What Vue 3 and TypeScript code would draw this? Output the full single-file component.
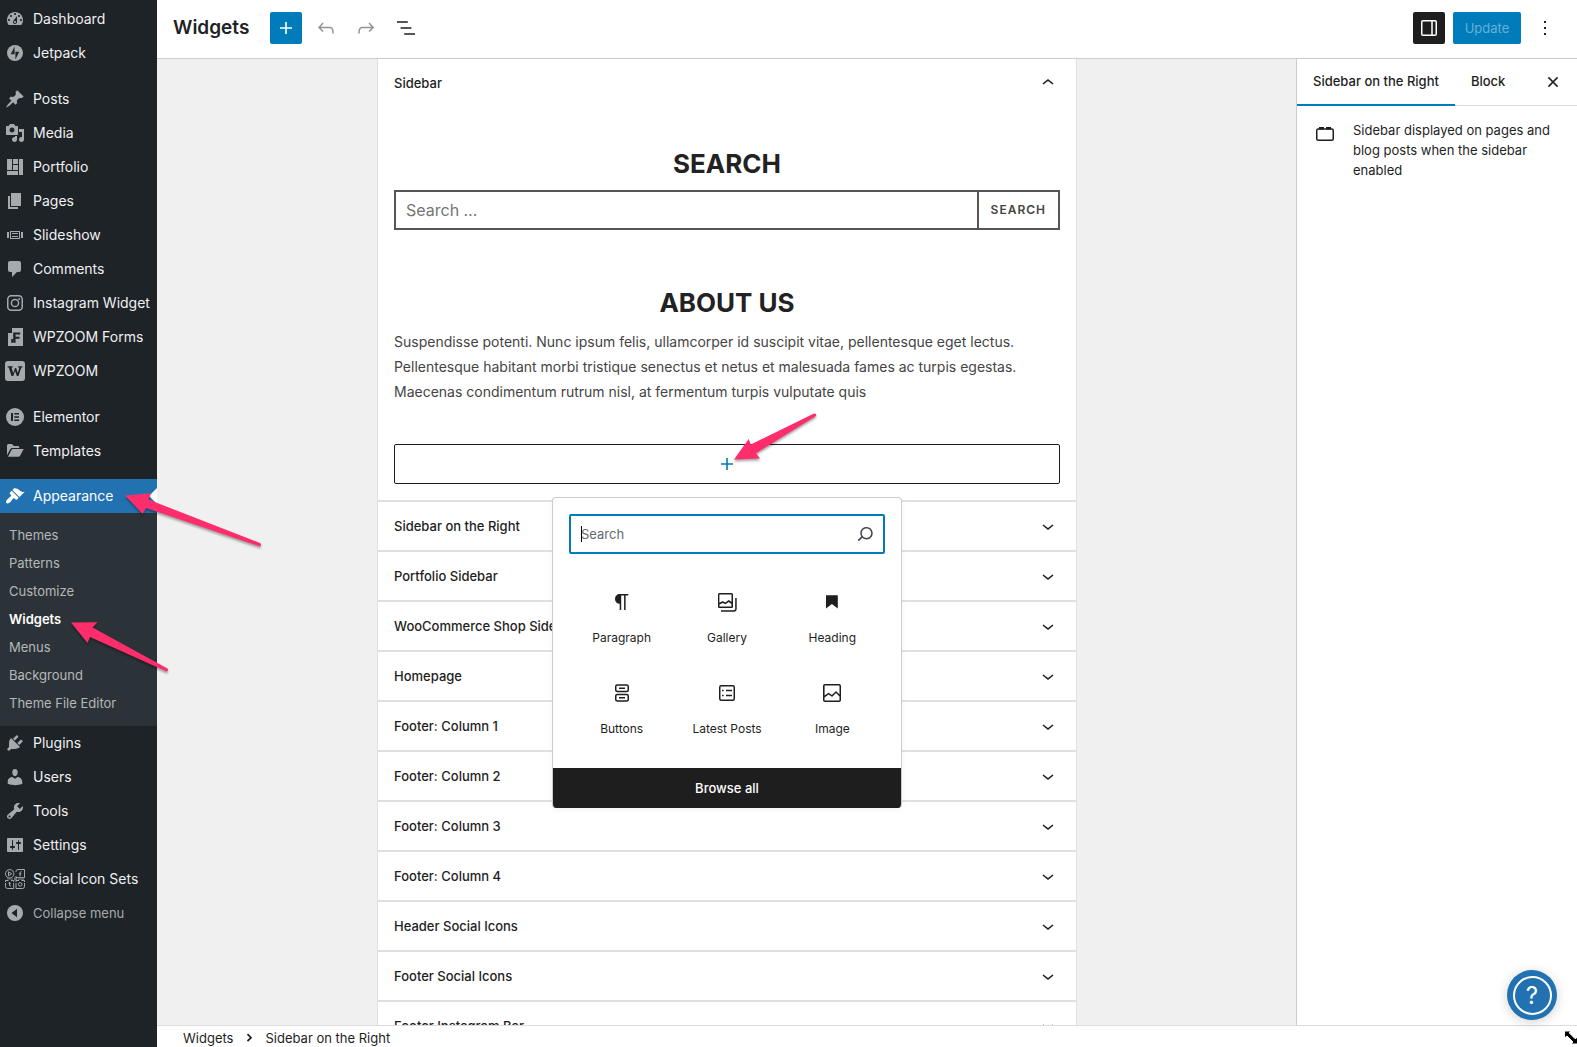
<script setup lang="ts">
import { ref } from 'vue'

interface MenuItem {
  label: string
  icon: string
  separated?: boolean
}

const icons: Record<string, string> = {
  dashboard:
    '<path fill-rule="evenodd" d="M3.76 16h12.48c1.1-1.37 1.76-3.11 1.76-5 0-4.42-3.58-8-8-8s-8 3.58-8 8c0 1.89.66 3.63 1.76 5zM10 4c.55 0 1 .45 1 1s-.45 1-1 1-1-.45-1-1 .45-1 1-1zM6 6c.55 0 1 .45 1 1s-.45 1-1 1-1-.45-1-1 .45-1 1-1zm8 0c.55 0 1 .45 1 1s-.45 1-1 1-1-.45-1-1 .45-1 1-1zm-5.37 5.55L12 7v6c0 1.1-.9 2-2 2s-2-.9-2-2c0-.57.24-1.08.63-1.45zM4 10c.55 0 1 .45 1 1s-.45 1-1 1-1-.45-1-1 .45-1 1-1zm12 0c.55 0 1 .45 1 1s-.45 1-1 1-1-.45-1-1 .45-1 1-1zm-5 3c0-.55-.45-1-1-1s-1 .45-1 1 .45 1 1 1 1-.45 1-1z"/>',
  jetpack:
    '<circle cx="10" cy="10" r="8"/><path fill="#1d2327" d="M9.6 3.6v7.6H5.7zM10.4 16.4V8.8h3.9z"/>',
  posts:
    '<path d="M10.44 3.02l1.82-1.82 6.36 6.35-1.83 1.82c-1.05-.68-2.48-.57-3.41.36l-.75.75c-.92.93-1.04 2.35-.35 3.41l-1.83 1.82-2.41-2.41-2.8 2.79c-.42.42-3.38 2.71-3.8 2.29s1.86-3.39 2.28-3.81l2.79-2.79L4.1 9.36l1.83-1.82c1.05.69 2.48.57 3.4-.36l.75-.75c.93-.92 1.05-2.35.36-3.41z"/>',
  media:
    '<path fill-rule="evenodd" d="M13 11V4c0-.55-.45-1-1-1h-1.67L9 1H5L3.67 3H2c-.55 0-1 .45-1 1v7c0 .55.45 1 1 1h10c.55 0 1-.45 1-1zM7 4.5c1.38 0 2.5 1.12 2.5 2.5S8.38 9.5 7 9.5 4.5 8.38 4.5 7 5.62 4.5 7 4.5zM14 6h5v10.5c0 1.38-1.12 2.5-2.5 2.5S14 17.88 14 16.5s1.12-2.5 2.5-2.5c.17 0 .34.02.5.05V9h-3V6zm-4 8.05V13h2v3.5c0 1.38-1.12 2.5-2.5 2.5S7 17.88 7 16.5 8.12 14 9.5 14c.17 0 .34.02.5.05z"/>',
  portfolio: '<path d="M2 2h5v11H2V2zm6 0h5v5H8V2zm6 0h4v16h-4V2zM8 8h5v5H8V8zm-6 6h11v4H2v-4z"/>',
  pages: '<path d="M6 15V2h10v13H6zm-1 1h8v2H3V5h2v11z"/>',
  slideshow:
    '<path fill-rule="evenodd" d="M5 14V6h10v8H5zm-3-1V7h2v6H2zm4-6v6h8V7H6zm10 0h2v6h-2V7zm-3 2V8H7v1h6zm0 3v-1H7v1h6z"/>',
  comments:
    '<path d="M5 2h9c1.1 0 2 .9 2 2v7c0 1.1-.9 2-2 2h-2l-5 5v-5H5c-1.1 0-2-.9-2-2V4c0-1.1.9-2 2-2z"/>',
  instagram:
    '<g fill="none" stroke="currentColor" stroke-width="1.5"><rect x="2.75" y="2.75" width="14.5" height="14.5" rx="3.5"/><circle cx="10" cy="10" r="3.6"/></g><circle cx="14.1" cy="5.9" r="1"/>',
  forms:
    '<path d="M7 1h11v18H3V5h4z"/><path fill="#1d2327" d="M3 5h3.2V1H7v5H3zM8.2 5.4h7v2h-4.6v2.3h4v2h-4v4H8.2z"/><path fill="#1d2327" d="M8.2 12h-2v3.7h2z"/>',
  wpzoom:
    '<rect width="20" height="20" rx="3"/><path fill="#1d2327" d="M2.7 5.3h5v1.3H6.5l1.7 5.3 1.8-5h1.1l1.7 5 1.6-5.3h-1.3V5.3h4.3v1.3h-1.1l-2.8 8.5h-1.7l-1.7-5-1.8 5H6.5L3.8 6.6H2.7z"/>',
  elementor:
    '<circle cx="10" cy="10" r="9"/><path fill="#1d2327" d="M6 6h2v8H6zM9.3 6H14v1.6H9.3zM9.3 9.2H14v1.6H9.3zM9.3 12.4H14V14H9.3z"/>',
  templates:
    '<path d="M2 14.3V4.5Q2 3 3.5 3H7l1.8 2H13q1.3 0 1.3 1.3V7H7.5Q6 7 5.2 8.3zM3 15.7L6.3 9.2Q6.8 8 8.2 8h10.5l-3.5 6.5q-.6 1.2-2 1.2z"/>',
  appearance:
    '<path d="M14.48 11.06L7.41 3.99l1.5-1.5c.5-.56 2.3-.47 3.51.32 1.21.8 1.43 1.28 2.91 2.1 1.18.64 2.45 1.26 4.45.85zm-.71.71L6.7 4.7 4.93 6.47c-.39.39-.39 1.02 0 1.41l1.06 1.06c.39.39.39 1.03 0 1.42-.6.6-1.43 1.11-2.21 1.69-.35.26-.7.53-1.01.84C1.43 14.23.4 16.08 1.4 17.07c.99 1 2.84-.03 4.18-1.36.31-.31.58-.66.85-1.02.57-.78 1.08-1.61 1.69-2.21.39-.39 1.02-.39 1.41 0l1.06 1.06c.39.39 1.02.39 1.41 0z"/>',
  plugins:
    '<path d="M13.11 4.36L9.87 7.6 8 5.73l3.24-3.24c.35-.34 1.05-.2 1.56.32.52.51.66 1.21.31 1.55zm-8 1.77l.91-1.12 9.01 9.01-1.19.84c-.71.71-2.63 1.16-3.82 1.16H6.14L4.9 17.26c-.59.59-1.54.59-2.12 0-.59-.58-.59-1.53 0-2.12l1.24-1.24v-3.88c0-1.13.4-3.19 1.09-3.89zm7.26 3.97l3.24-3.24c.34-.35 1.04-.21 1.55.31.52.51.66 1.21.31 1.55l-3.24 3.25z"/>',
  users:
    '<path d="M10 9.25c-2.27 0-2.73-3.44-2.73-3.44C7 4.02 7.82 2 9.97 2c2.16 0 2.98 2.02 2.71 3.81 0 0-.41 3.44-2.68 3.44zm0 2.57L12.72 10c2.39 0 4.52 2.33 4.52 4.53v2.49s-3.65 1.13-7.24 1.13c-3.65 0-7.24-1.13-7.24-1.13v-2.49c0-2.25 1.94-4.48 4.47-4.48z"/>',
  tools:
    '<path fill-rule="evenodd" d="M16.68 9.77c-1.34 1.34-3.3 1.67-4.95.99l-5.41 6.52c-.99.99-2.59.99-3.58 0s-.99-2.59 0-3.57l6.52-5.42c-.68-1.65-.35-3.61.99-4.95 1.28-1.28 3.12-1.62 4.72-1.06l-2.89 2.89 2.82 2.82 2.86-2.87c.53 1.58.18 3.39-1.08 4.65zM3.81 16.21c.4.39 1.04.39 1.43 0 .4-.4.4-1.04 0-1.43-.39-.4-1.03-.4-1.43 0-.39.39-.39 1.03 0 1.43z"/>',
  settings:
    '<path fill-rule="evenodd" d="M18 16V4c0-.55-.45-1-1-1H3c-.55 0-1 .45-1 1v12c0 .55.45 1 1 1h14c.55 0 1-.45 1-1zM8 11h1c.55 0 1 .45 1 1s-.45 1-1 1H8v1.5c0 .28-.22.5-.5.5s-.5-.22-.5-.5V13H6c-.55 0-1-.45-1-1s.45-1 1-1h1V5.5c0-.28.22-.5.5-.5s.5.22.5.5V11zm5-2h-1c-.55 0-1-.45-1-1s.45-1 1-1h1V5.5c0-.28.22-.5.5-.5s.5.22.5.5V7h1c.55 0 1 .45 1 1s-.45 1-1 1h-1v5.5c0 .28-.22.5-.5.5s-.5-.22-.5-.5V9z"/>',
  social:
    '<g fill="none" stroke="currentColor" stroke-width="1"><circle cx="4.7" cy="4.8" r="4.2"/><path d="M3.5 2.8l3.3 2-3.3 2zM11 3V2.5Q11 .5 13 .5h6.500v8.200H11V7M.5 14v3.5q0 2 2 2h6.200V14M.5 13v-1.5h3M6 11.5h2.7V13M11 14v5.5h6.5q2 0 2-2V14M11 13v-1.5h3M16.5 11.5h3V13"/><circle cx="15.2" cy="15.4" r="1.8"/><path d="M16.6 2.7h-.5q-1 0-1 1.1v3.7M13.9 4.8h2.4M4.5 13v3.2q0 1 1.5.8M3.5 14.2h2.4"/></g><path opacity=".6" d="M9 8.5h3v3H9zM13 9.4h6v1.400h-6zM2 9.6h6v1H2z"/>',
}

const topMenu: MenuItem[] = [
  { label: 'Dashboard', icon: 'dashboard' },
  { label: 'Jetpack', icon: 'jetpack' },
  { label: 'Posts', icon: 'posts', separated: true },
  { label: 'Media', icon: 'media' },
  { label: 'Portfolio', icon: 'portfolio' },
  { label: 'Pages', icon: 'pages' },
  { label: 'Slideshow', icon: 'slideshow' },
  { label: 'Comments', icon: 'comments' },
  { label: 'Instagram Widget', icon: 'instagram' },
  { label: 'WPZOOM Forms', icon: 'forms' },
  { label: 'WPZOOM', icon: 'wpzoom' },
  { label: 'Elementor', icon: 'elementor', separated: true },
  { label: 'Templates', icon: 'templates' },
]

const submenu: string[] = [
  'Themes',
  'Patterns',
  'Customize',
  'Widgets',
  'Menus',
  'Background',
  'Theme File Editor',
]

const bottomMenu: MenuItem[] = [
  { label: 'Plugins', icon: 'plugins' },
  { label: 'Users', icon: 'users' },
  { label: 'Tools', icon: 'tools' },
  { label: 'Settings', icon: 'settings' },
  { label: 'Social Icon Sets', icon: 'social' },
]

const areas: string[] = [
  'Sidebar on the Right',
  'Portfolio Sidebar',
  'WooCommerce Shop Sidebar',
  'Homepage',
  'Footer: Column 1',
  'Footer: Column 2',
  'Footer: Column 3',
  'Footer: Column 4',
  'Header Social Icons',
  'Footer Social Icons',
  'Footer Instagram Bar',
]

const blocks: MenuItem[] = [
  {
    label: 'Paragraph',
    icon: '<path d="M18.3 4H9.9v-.1l-.9.2c-2.3.4-4 2.4-4 4.8s1.7 4.4 4 4.8l.7.1V20h1.5V5.5h2.9V20h1.5V5.5h2.7V4z"/>',
  },
  {
    label: 'Gallery',
    icon: '<path fill-rule="evenodd" d="M20.2 8v11c0 .7-.6 1.2-1.2 1.2H6v1.5h13c1.5 0 2.7-1.2 2.7-2.8V8zM18 16.4V4.6c0-.9-.7-1.6-1.6-1.6H4.6C3.7 3 3 3.7 3 4.6v11.8c0 .9.7 1.6 1.6 1.6h11.8c.9 0 1.6-.7 1.6-1.6zM4.5 4.6c0-.1.1-.1.1-.1h11.8c.1 0 .1.1.1.1V12l-2.3-1.7c-.3-.2-.6-.2-.9 0l-2.9 2.1L8 11.3c-.2-.1-.5-.1-.7 0l-2.9 1.5V4.6zm0 11.8v-1.8l3.2-1.7 2.4 1.2c.2.1.5.1.8-.1l2.8-2 2.7 2v2.5c0 .1-.1.1-.1.1H4.6c0-.1-.1-.2-.1-.2z"/>',
  },
  { label: 'Heading', icon: '<path d="M6 5.2v13.4l5.9-4.7 5.9 4.7V5.2z"/>' },
  {
    label: 'Buttons',
    icon: '<g fill="none" stroke="currentColor" stroke-width="1.5"><rect x="5.75" y="3.95" width="12.5" height="6.5" rx="1.5"/><rect x="5.75" y="13.55" width="12.5" height="6.5" rx="1.5"/><path d="M9 7.2h6M9 16.8h6"/></g>',
  },
  {
    label: 'Latest Posts',
    icon: '<g fill="none" stroke="currentColor" stroke-width="1.5"><rect x="4.75" y="4.75" width="14.5" height="14.5" rx="1.5"/><path d="M11 9.5h6M11 14.5h6"/></g><path d="M7 8.7h1.6v1.6H7zM7 13.7h1.6v1.6H7z"/>',
  },
  {
    label: 'Image',
    icon: '<path fill-rule="evenodd" d="M19 3H5c-1.1 0-2 .9-2 2v14c0 1.1.9 2 2 2h14c1.1 0 2-.9 2-2V5c0-1.1-.9-2-2-2zM5 4.5h14c.3 0 .5.2.5.5v8.4l-3-2.9c-.3-.3-.8-.3-1 0L11.900 14 9 12c-.3-.2-.6-.2-.8 0l-3.6 2.6V5c-.1-.3.1-.5.4-.5zm14 15H5c-.3 0-.5-.2-.5-.5v-2.4l4.1-3 3 1.9c.3.2.7.2.9-.1L16 12l3.5 3.4V19c0 .3-.2.5-.5.5z"/>',
  },
]

const siteQuery = ref('')
const blockQuery = ref('')
</script>

<template>
  <div class="app">
    <nav class="menu" aria-label="Main menu">
      <ul class="menu-list">
        <li v-for="item in topMenu" :key="item.label" :class="{ separated: item.separated }">
          <a href="#" class="menu-link">
            <svg class="menu-icon" viewBox="0 0 20 20" v-html="icons[item.icon]"></svg>
            {{ item.label }}
          </a>
        </li>
        <li class="menu-group">
          <a href="#" class="menu-link current">
            <svg class="menu-icon" viewBox="0 0 20 20" v-html="icons.appearance"></svg>
            Appearance
          </a>
          <ul class="submenu">
            <li v-for="name in submenu" :key="name">
              <a href="#" class="submenu-link" :class="{ active: name === 'Widgets' }">{{ name }}</a>
            </li>
          </ul>
        </li>
        <li v-for="item in bottomMenu" :key="item.label">
          <a href="#" class="menu-link">
            <svg class="menu-icon" viewBox="0 0 20 20" v-html="icons[item.icon]"></svg>
            {{ item.label }}
          </a>
        </li>
      </ul>
      <button type="button" class="collapse">
        <svg class="menu-icon" viewBox="0 0 20 20">
          <circle cx="10" cy="10" r="8" />
          <path fill="#1d2327" d="M12 5.7v8.6L6.5 10z" />
        </svg>
        Collapse menu
      </button>
      <svg class="pointer pointer-menu" width="200" height="200" viewBox="70 485 200 200" aria-hidden="true">
        <path d="M125 495.500L151 493.300 148.300 499.500 260 543Q262 544.500 260 546.500L146 508 142.700 514z" />
        <path d="M71 622.500L97.500 622.300 92.500 627.500 167.500 668.500Q169 670.500 166.700 671.500L90 637 87.500 643z" />
      </svg>
    </nav>

    <div class="editor">
      <header class="topbar">
        <h1 class="title">Widgets</h1>
        <div class="tools">
          <button type="button" class="tool primary" aria-label="Add block">
            <svg viewBox="0 0 24 24"><path d="M18 11.2h-5.2V6h-1.6v5.2H6v1.6h5.2V18h1.6v-5.2H18z" /></svg>
          </button>
          <button type="button" class="tool muted" aria-label="Undo">
            <svg viewBox="0 0 24 24"><path d="M18.3 11.7c-.6-.6-1.4-.9-2.3-.9H6.7l2.9-3.3-1.1-1-4.5 5L8.5 16l1-1-2.7-2.7H16c.5 0 .9.2 1.3.5 1 1 1 3.400 1 4.500v.3h1.500v-.2c0-1.500 0-4.300-1.500-5.700z" /></svg>
          </button>
          <button type="button" class="tool muted" aria-label="Redo">
            <svg viewBox="0 0 24 24"><path d="M15.6 6.5l-1.1 1 2.9 3.3H8c-.9 0-1.7.3-2.3.9-1.4 1.5-1.4 4.2-1.4 5.6v.2h1.500v-.3c0-1.100 0-3.500 1-4.500.3-.3.7-.5 1.300-.5h9.200L14.500 15l1.100 1.100 4.600-4.600-4.600-5z" /></svg>
          </button>
          <button type="button" class="tool" aria-label="List view">
            <svg viewBox="0 0 24 24"><path d="M13.8 5.2H3v1.5h10.8V5.2zm-3.6 12v1.5H21v-1.5H10.2zm7.2-6H6.6v1.5h10.8v-1.5z" /></svg>
          </button>
        </div>
        <div class="actions">
          <button type="button" class="tool pressed" aria-label="Settings">
            <svg viewBox="0 0 24 24">
              <path fill="none" stroke="currentColor" stroke-width="1.5" d="M6 4.75h12q1.25 0 1.25 1.25v12q0 1.25-1.25 1.25H6q-1.25 0-1.25-1.25V6Q4.75 4.75 6 4.75zM15 5v14" />
            </svg>
          </button>
          <button type="button" class="update">Update</button>
          <button type="button" class="tool" aria-label="Options">
            <svg viewBox="0 0 24 24"><path d="M13 19h-2v-2h2v2zm0-6h-2v-2h2v2zm0-6h-2V5h2v2z" /></svg>
          </button>
        </div>
      </header>

      <div class="body">
        <main class="canvas">
          <div class="column">
            <section class="area">
              <button type="button" class="area-toggle">
                Sidebar
                <svg class="chevron" viewBox="0 0 24 24"><path d="M6.5 12.4L12 8l5.5 4.4-.9 1.2L12 10l-4.5 3.6-1-1.2z" /></svg>
              </button>
              <div class="area-body">
                <h2 class="widget-title">SEARCH</h2>
                <form class="site-search" @submit.prevent>
                  <input v-model="siteQuery" type="search" placeholder="Search …" aria-label="Search the site" />
                  <button type="submit">SEARCH</button>
                </form>
                <h2 class="widget-title about">ABOUT US</h2>
                <p class="about-text">
                  Suspendisse potenti. Nunc ipsum felis, ullamcorper id suscipit vitae, pellentesque eget lectus. Pellentesque habitant morbi tristique senectus et netus et malesuada fames ac turpis egestas. Maecenas condimentum rutrum nisl, at fermentum turpis vulputate quis
                </p>
                <div class="appender">
                  <button type="button" class="appender-button" aria-label="Add block">
                    <svg viewBox="0 0 24 24"><path d="M18 11.2h-5.2V6h-1.6v5.2H6v1.6h5.2V18h1.6v-5.2H18z" /></svg>
                  </button>
                  <svg class="pointer pointer-add" width="100" height="64" viewBox="727 404 100 64" aria-hidden="true">
                    <path d="M734 459.500L748.700 439 750.700 444.500 814 413.500Q817 413.500 816 416L756 453.300 760 458.500z" />
                  </svg>
                  <div class="inserter" role="dialog" aria-label="Add a block">
                    <div class="block-search">
                      <span class="caret"></span>
                      <input v-model="blockQuery" type="text" placeholder="Search" aria-label="Search for blocks" />
                      <svg viewBox="0 0 24 24"><path fill-rule="evenodd" d="M13.5 5C10 5 7.3 7.700 7.300 11.200c0 1.300.4 2.400 1 3.400l-3.600 3.500 1.100 1.100 3.500-3.400c1.100 1 2.600 1.600 4.200 1.600 3.500 0 6.200-2.800 6.200-6.200S17 5 13.500 5zm0 10.900c-2.600 0-4.700-2.100-4.700-4.700s2.100-4.700 4.700-4.700 4.700 2.100 4.700 4.700-2.100 4.700-4.700 4.700z" /></svg>
                    </div>
                    <div class="blocks">
                      <button v-for="block in blocks" :key="block.label" type="button" class="block">
                        <svg viewBox="0 0 24 24" v-html="block.icon"></svg>
                        {{ block.label }}
                      </button>
                    </div>
                    <button type="button" class="browse">Browse all</button>
                  </div>
                </div>
              </div>
            </section>
            <section v-for="area in areas" :key="area" class="area">
              <button type="button" class="area-toggle">
                {{ area }}
                <svg class="chevron" viewBox="0 0 24 24"><path d="M17.5 11.6L12 16l-5.5-4.4.9-1.2L12 14l4.5-3.6 1 1.2z" /></svg>
              </button>
            </section>
          </div>
        </main>

        <aside class="settings">
          <div class="tabs">
            <button type="button" class="tab selected">Sidebar on the Right</button>
            <button type="button" class="tab">Block</button>
            <button type="button" class="close" aria-label="Close settings">
              <svg viewBox="0 0 24 24"><path fill="none" stroke="currentColor" stroke-width="1.5" d="M7.4 7.4l9.2 9.2M16.6 7.4l-9.2 9.2" /></svg>
            </button>
          </div>
          <div class="area-info">
            <svg viewBox="0 0 24 24">
              <rect x="3.75" y="7" width="16.5" height="11.3" rx="1.5" fill="none" stroke="currentColor" stroke-width="1.5" />
              <path d="M6 5h5v2.500H6zM13 5h5v2.500h-5z" />
            </svg>
            <p>Sidebar displayed on pages and blog posts when the sidebar enabled</p>
          </div>
        </aside>
      </div>

      <footer class="breadcrumb">
        <a href="#">Widgets</a>
        <svg viewBox="0 0 24 24"><path fill="none" stroke="currentColor" stroke-width="1.700" d="M10.500 8.200l3.500 3.500-3.500 3.500" /></svg>
        <a href="#">Sidebar on the Right</a>
      </footer>
    </div>

    <button type="button" class="help" aria-label="Help"><span>?</span></button>
    <svg class="cursor" width="14" height="18" viewBox="0 0 14 18" aria-hidden="true">
      <path d="M1.500 2h6.500L6.200 3.800l6 6L14.500 8v7H8l2-2-6-6L1.500 9z" fill="#000" stroke="#fff" stroke-width="1" />
    </svg>
  </div>
</template>

<style>
body {
  margin: 0;
}
</style>

<style scoped>
.app {
  position: relative;
  display: flex;
  height: 100vh;
  overflow: hidden;
  background: #fff;
  color: #1e1e1e;
  font: 13px/20px Inter, 'Liberation Sans', sans-serif;
}

button,
input {
  box-sizing: border-box;
  margin: 0;
  padding: 0;
  border: 0;
  background: none;
  color: inherit;
  font: inherit;
}

a {
  color: inherit;
  text-decoration: none;
}

svg {
  flex: none;
  fill: currentColor;
}

ul {
  margin: 0;
  padding: 0;
  list-style: none;
}

.menu {
  position: relative;
  z-index: 2;
  flex: none;
  width: 157px;
  box-sizing: border-box;
  padding-top: 2px;
  background: #1d2327;
}

.separated {
  margin-top: 12px;
}

.menu-group {
  margin-top: 11px;
}

.menu-link,
.collapse {
  display: flex;
  align-items: center;
  gap: 8px;
  height: 34px;
  padding-left: 5px;
  color: #f0f0f1;
  font-size: 14px;
  white-space: nowrap;
}

.menu-icon {
  width: 20px;
  height: 20px;
  color: #a7aaad;
}

.menu-link.current {
  position: relative;
  background: #2271b1;
  color: #fff;
}

.menu-link.current .menu-icon {
  color: #fff;
}

.menu-link.current::after {
  content: '';
  position: absolute;
  right: 0;
  top: 9px;
  border: 8px solid transparent;
  border-left-width: 0;
  border-right-color: #fff;
}

.submenu {
  padding: 8px 0 9px;
  background: #2c3338;
}

.submenu-link {
  display: block;
  padding-left: 9px;
  color: #b5b8ba;
  line-height: 28px;
}

.submenu-link.active {
  color: #fff;
  font-weight: 600;
}

.collapse {
  color: #a7aaad;
  font-size: 13px;
}

.pointer {
  position: absolute;
  z-index: 3;
  fill: #ff2d6c;
  filter: drop-shadow(0 2px 1px rgba(0, 0, 0, 0.35));
  pointer-events: none;
}

.pointer-menu {
  left: 70px;
  top: 485px;
}

.editor {
  display: flex;
  flex: 1;
  flex-direction: column;
  min-width: 0;
}

.topbar {
  display: flex;
  flex: none;
  align-items: center;
  height: 56px;
  padding: 0 16px 2px;
  border-bottom: 1px solid #ccc;
}

.title {
  margin: 0 21px 0 0;
  color: #1d2327;
  font-size: 19px;
  font-weight: 600;
  line-height: 24px;
}

.tools,
.actions {
  display: flex;
  gap: 8px;
}

.actions {
  margin-left: auto;
}

.tool {
  display: flex;
  align-items: center;
  justify-content: center;
  width: 32px;
  height: 32px;
  border-radius: 2px;
}

.tool svg {
  width: 24px;
  height: 24px;
}

.tool.primary {
  background: #007cba;
  color: #fff;
}

.tool.muted {
  color: #949494;
}

.tool.pressed {
  background: #1e1e1e;
  color: #fff;
}

.update {
  width: 68px;
  height: 32px;
  border-radius: 2px;
  background: #007cba;
  color: #66b0d6;
}

.body {
  display: flex;
  flex: 1;
  min-height: 0;
}

.canvas {
  flex: 1;
  min-width: 0;
  padding-left: 1px;
  overflow: hidden;
  background: #f0f0f0;
}

.column {
  box-sizing: border-box;
  width: 700px;
  max-width: 100%;
  margin: 0 auto;
  border: solid #e0e0e0;
  border-width: 0 1px;
  background: #fff;
}

.area {
  border-bottom: 2px solid #e0e0e0;
}

.area-toggle {
  display: flex;
  align-items: center;
  justify-content: space-between;
  width: 100%;
  height: 48px;
  padding: 0 16px;
  font-weight: 500;
}

.chevron {
  width: 24px;
  height: 24px;
}

.area-body {
  padding: 41px 16px 16px;
}

.widget-title {
  margin: 0 0 10px;
  color: #222;
  font-size: 26px;
  font-weight: 700;
  line-height: 32px;
  text-align: center;
}

.widget-title.about {
  margin-top: 57px;
}

.site-search {
  display: flex;
  height: 40px;
  box-sizing: border-box;
  border: 2px solid #555;
}

.site-search input {
  flex: 1;
  min-width: 0;
  padding: 0 10px;
  font-size: 16px;
  appearance: none;
}

.site-search input::placeholder {
  color: #757575;
  opacity: 1;
}

.site-search button {
  padding: 0 12px;
  border-left: 2px solid #555;
  color: #444;
  font-size: 12px;
  font-weight: 600;
  letter-spacing: 1px;
}

.about-text {
  margin: 0 0 40px;
  color: #444;
  font-size: 14px;
  line-height: 25px;
}

.appender {
  position: relative;
}

.appender-button {
  display: flex;
  align-items: center;
  justify-content: center;
  width: 100%;
  height: 40px;
  border: 1px solid #1e1e1e;
  border-radius: 2px;
  color: #007cba;
}

.appender-button svg {
  width: 24px;
  height: 24px;
}

.pointer-add {
  left: 50%;
  top: -40px;
}

.inserter {
  position: absolute;
  z-index: 1;
  top: 53px;
  left: 50%;
  box-sizing: border-box;
  width: 350px;
  margin-left: -175px;
  padding: 16px 0 0;
  overflow: hidden;
  border: 1px solid #ccc;
  border-bottom: 0;
  border-radius: 4px;
  background: #fff;
  box-shadow: 0 2px 6px rgba(0, 0, 0, 0.05);
}

.block-search {
  position: relative;
  display: flex;
  align-items: center;
  height: 36px;
  margin: 0 16px 24px;
  padding: 0 6px 0 10px;
  border: 2px solid #007cba;
  border-radius: 2px;
}

.block-search input {
  flex: 1;
  min-width: 0;
  height: 36px;
}

.block-search input::placeholder {
  color: #646970;
  opacity: 1;
}

.block-search svg {
  width: 24px;
  height: 24px;
  color: #3c434a;
}

.caret {
  position: absolute;
  left: 10px;
  width: 1px;
  height: 16px;
  background: #000;
}

.blocks {
  display: grid;
  grid-template-columns: repeat(3, 1fr);
  margin: 0 16px;
  padding-bottom: 8px;
}

.block {
  display: flex;
  flex-direction: column;
  align-items: center;
  gap: 14px;
  height: 91px;
  padding-top: 12px;
  font-size: 12px;
}

.block svg {
  width: 24px;
  height: 24px;
}

.browse {
  display: block;
  width: 350px;
  height: 40px;
  margin: 0 -1px;
  background: #1e1e1e;
  color: #fff;
  font-weight: 500;
}

.settings {
  flex: none;
  width: 280px;
  border-left: 1px solid #ccc;
}

.tabs {
  display: flex;
  height: 46px;
  border-bottom: 1px solid #ddd;
}

.tab {
  height: 47px;
  padding: 0 16px 3px;
  font-weight: 500;
  white-space: nowrap;
}

.tab.selected {
  box-shadow: inset 0 -2px #007cba;
}

.close {
  display: flex;
  align-items: center;
  margin: 0 12px 0 auto;
}

.close svg,
.area-info svg {
  width: 24px;
  height: 24px;
}

.area-info {
  display: flex;
  gap: 16px;
  padding: 14px 16px;
}

.area-info svg {
  margin-top: 2px;
}

.area-info p {
  margin: 0;
}

.breadcrumb {
  display: flex;
  flex: none;
  align-items: center;
  gap: 4px;
  height: 22px;
  padding: 3px 26px 0;
  box-sizing: border-box;
  border-top: 1px solid #ddd;
}

.breadcrumb svg {
  width: 24px;
  height: 24px;
}

.help {
  position: absolute;
  right: 20px;
  bottom: 27px;
  z-index: 3;
  display: flex;
  align-items: center;
  justify-content: center;
  width: 50px;
  height: 50px;
  border-radius: 50%;
  background: #2271b1;
  color: #fff;
  box-shadow: 0 2px 12px rgba(0, 0, 0, 0.18);
}

.help span {
  width: 35px;
  border: 2px solid #fff;
  border-radius: 50%;
  font-size: 24px;
  line-height: 35px;
}

.cursor {
  position: absolute;
  right: 0;
  bottom: 0;
  z-index: 4;
}
</style>
